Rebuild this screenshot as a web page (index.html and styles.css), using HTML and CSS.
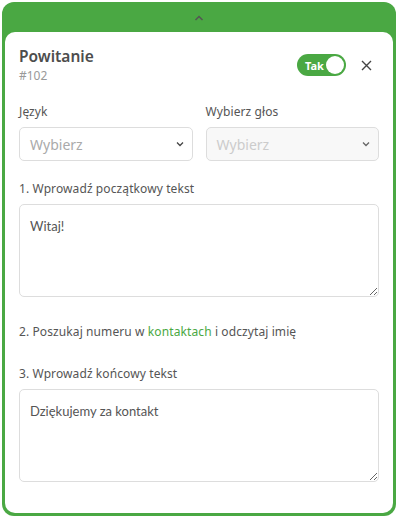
FILE: index.html
```html
<!DOCTYPE html>
<html lang="pl">
<head>
    <meta charset="UTF-8">
    <meta name="viewport" content="width=device-width, initial-scale=1.0">
    <title>Powitanie</title>
    <link rel="stylesheet" href="styles.css">
</head>
<body>
    <div class="step-card">
        <!-- Collapse handle -->
        <div class="step-handle">
            <svg width="12" height="8" viewBox="0 0 12 8"><path d="M2.5 6 L6 2.5 L9.5 6" fill="none" stroke="#555" stroke-width="1.5"/></svg>
        </div>

        <div class="step-body">
            <!-- Header -->
            <div class="step-header">
                <div>
                    <h2 class="step-title">Powitanie</h2>
                    <div class="step-id">#102</div>
                </div>
                <div class="step-actions">
                    <div class="toggle">
                        <span class="toggle-label">Tak</span>
                        <span class="toggle-knob"></span>
                    </div>
                    <button class="close-btn">
                        <svg width="11" height="11" viewBox="0 0 11 11"><path d="M1 1 L10 10 M10 1 L1 10" stroke="#444" stroke-width="1.4"/></svg>
                    </button>
                </div>
            </div>

            <!-- Language / voice -->
            <div class="field-row">
                <div class="field">
                    <label class="field-label">Język</label>
                    <div class="select-box">
                        <span>Wybierz</span>
                        <svg width="8" height="6" viewBox="0 0 8 6"><path d="M1 1.5 L4 4.5 L7 1.5" fill="none" stroke="#444" stroke-width="1.3"/></svg>
                    </div>
                </div>
                <div class="field">
                    <label class="field-label">Wybierz głos</label>
                    <div class="select-box disabled">
                        <span>Wybierz</span>
                        <svg width="8" height="6" viewBox="0 0 8 6"><path d="M1 1.5 L4 4.5 L7 1.5" fill="none" stroke="#666" stroke-width="1.3"/></svg>
                    </div>
                </div>
            </div>

            <div class="field">
                <label class="field-label">1. Wprowadź początkowy tekst</label>
                <textarea class="text-box">Witaj!</textarea>
            </div>

            <p class="step-note">2. Poszukaj numeru w <a href="#">kontaktach</a> i odczytaj imię</p>

            <div class="field">
                <label class="field-label">3. Wprowadź końcowy tekst</label>
                <textarea class="text-box">Dziękujemy za kontakt</textarea>
            </div>
        </div>
    </div>
</body>
</html>
```

FILE: styles.css
```css
/* Global Styles */
body {
    margin: 2px 3px 2px 2px;
    font-family: "Noto Sans", sans-serif;
    background-color: #fff;
    color: #555;
}

/* Card */
.step-card {
    background-color: #4aa843;
    border-radius: 12px;
    padding: 0 3px 3px 3px;
}

.step-handle {
    height: 30px;
    display: flex;
    align-items: center;
    justify-content: center;
    padding-top: 2px;
    box-sizing: border-box;
}

.step-body {
    background-color: #fff;
    border-radius: 10px;
    padding: 14px 14px 31px 14px;
}

/* Header */
.step-header {
    display: flex;
    justify-content: space-between;
    align-items: flex-start;
    margin-bottom: 20px;
}

.step-title {
    margin: 0;
    font-size: 15.5px;
    font-weight: 600;
    color: #4d4d4d;
    line-height: 20px;
}

.step-id {
    font-size: 12px;
    line-height: 16px;
    color: #999;
    margin-top: 2px;
}

.step-actions {
    display: flex;
    align-items: center;
    gap: 15px;
    margin-top: 8px;
    margin-right: 7px;
}

.toggle {
    display: flex;
    align-items: center;
    justify-content: space-between;
    width: 49px;
    height: 22px;
    background-color: #4aa843;
    border-radius: 11px;
    padding: 0 2px 0 8px;
    box-sizing: border-box;
}

.toggle-label {
    color: #fff;
    font-size: 11px;
    font-weight: 700;
}

.toggle-knob {
    width: 18px;
    height: 18px;
    border-radius: 50%;
    background-color: #fff;
}

.close-btn {
    border: none;
    background: none;
    padding: 0;
    display: flex;
    cursor: pointer;
}

/* Fields */
.field-row {
    display: flex;
    gap: 13px;
    margin-bottom: 20px;
}

.field {
    flex: 1;
    display: flex;
    flex-direction: column;
}

.field-label {
    font-size: 12px;
    line-height: 16px;
    letter-spacing: 0.1px;
    color: #555;
    margin-bottom: 7px;
}

.select-box {
    height: 34px;
    border: 1px solid #ddd;
    border-radius: 5px;
    display: flex;
    align-items: center;
    justify-content: space-between;
    padding: 0 8px 0 10px;
    box-sizing: border-box;
    font-size: 14px;
    color: #aaa;
}

.select-box.disabled {
    background-color: #f8f8f8;
    color: #ccc;
}

.text-box {
    height: 93px;
    border: 1px solid #ddd;
    border-radius: 5px;
    padding: 13px 10px;
    box-sizing: border-box;
    font-family: Lato, sans-serif;
    font-size: 13px;
    color: #555;
    resize: vertical;
}

.step-note {
    font-size: 12px;
    line-height: 16px;
    letter-spacing: 0.1px;
    margin: 27px 0 26px 0;
}

.step-note a {
    color: #4aa843;
    text-decoration: none;
}
```
